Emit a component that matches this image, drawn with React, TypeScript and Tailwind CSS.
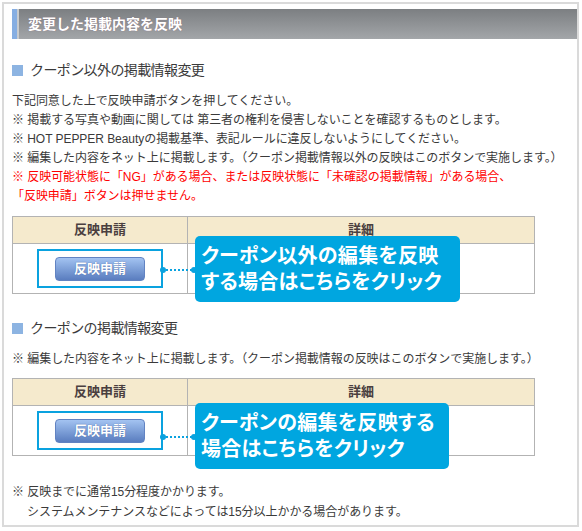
import React from "react";

const FONT = { fontFamily: '"Liberation Sans", "Noto Sans CJK JP", sans-serif' };

function Heading({ children }: { children: React.ReactNode }) {
  return (
    <div className="flex items-center h-[20px] gap-[7px]">
      <div className="w-[11px] h-[11px] bg-[#8db4e2]" />
      <div className="text-[14px] leading-[20px] text-[#3a3a3a] tracking-[-0.6px]">{children}</div>
    </div>
  );
}

function ReflectTable({
  lines,
  calloutW,
  calloutTop,
  dotY,
}: {
  lines: [string, string];
  calloutW: number;
  calloutTop: string;
  dotY: string;
}) {
  return (
    <div className="relative w-[523px] border border-[#b3b3b3]">
      <div className="flex h-[27px] bg-[#f5eacd] border-b border-[#b3b3b3]">
        <div className="w-[175px] border-r border-[#b3b3b3] flex items-center justify-center text-[13px] font-bold text-[#4a3f3f]">
          反映申請
        </div>
        <div className="flex-1 flex items-center justify-center text-[13px] font-bold text-[#4a3f3f]">
          詳細
        </div>
      </div>
      <div className="flex h-[49px]">
        <div className="w-[175px] border-r border-[#b3b3b3] flex items-center justify-center">
          <div className="w-[126px] h-[39px] border-2 border-[#0aa2df] flex items-center justify-center">
            <div className="w-[90px] h-[24px] rounded-[4px] border border-[#6283c2] bg-gradient-to-b from-[#a3c3f1] to-[#5a7dbf] flex items-center justify-center text-white font-bold text-[13px] [text-shadow:0_0_1px_#3b5a99]">
              反映申請
            </div>
          </div>
        </div>
        <div className="flex-1" />
      </div>
      {/* connector */}
      <div className={`absolute left-[147px] w-[6px] h-[6px] rounded-full bg-[#0aa2df] ${dotY}`} />
      <div className={`absolute left-[153px] w-[26px] h-0 border-t-2 border-dotted border-[#0aa2df] mt-[2px] ${dotY}`} />
      <div className={`absolute left-[178px] w-[6px] h-[6px] rounded-full bg-[#0aa2df] ${dotY}`} />
      <div
        className={`absolute left-[182px] ${calloutTop} h-[66px] rounded-[5px] bg-[#00a6e0] text-white font-bold text-[20px] leading-[26px] pt-[7px] pl-[6px] whitespace-nowrap [font-feature-settings:'palt'] tracking-[0.3px]`}
        style={{ width: calloutW }}
      >
        {lines[0]}
        <br />
        {lines[1]}
      </div>
    </div>
  );
}

export default function App() {
  return (
    <div className="w-[582px] h-[531px] bg-white pt-[2px] pl-[2px] pr-[3px] pb-[4px]" style={FONT}>
      <div className="h-full border-2 border-[#dadada] pl-[8px] pt-[5px] text-[#3a3a3a]">
        <div className="flex h-[30px]">
          <div className="w-[5px] bg-[#86aee2]" />
          <div className="w-[2px] bg-[#c8cbce]" />
          <div className="flex-1 bg-gradient-to-b from-[#7c7f82] to-[#a3a6a9] flex items-center pl-[9px] text-white font-bold text-[14px] [text-shadow:0_0_1px_#8a6a7a]">
            変更した掲載内容を反映
          </div>
        </div>

        <div className="mt-[21px]">
          <Heading>クーポン以外の掲載情報変更</Heading>
        </div>

        <div className="mt-[12px] text-[12px] leading-[19px] tracking-[-0.05px] whitespace-nowrap">
          <div>下記同意した上で反映申請ボタンを押してください。</div>
          <div>※ 掲載する写真や動画に関しては 第三者の権利を侵害しないことを確認するものとします。</div>
          <div>※ HOT PEPPER Beautyの掲載基準、表記ルールに違反しないようにしてください。</div>
          <div>※ 編集した内容をネット上に掲載します。（クーポン掲載情報以外の反映はこのボタンで実施します。）</div>
          <div className="text-[#ff0000]">※ 反映可能状態に「NG」がある場合、または反映状態に「未確認の掲載情報」がある場合、</div>
          <div className="text-[#ff0000]">「反映申請」ボタンは押せません。</div>
        </div>

        <div className="mt-[10px]">
          <ReflectTable
            lines={["クーポン以外の編集を反映", "する場合はこちらをクリック"]}
            calloutW={265}
            calloutTop="top-[19px]"
            dotY="top-[50px]"
          />
        </div>

        <div className="mt-[24px]">
          <Heading>クーポンの掲載情報変更</Heading>
        </div>

        <div className="mt-[12px] text-[12px] leading-[19px] tracking-[-0.05px] whitespace-nowrap">
          ※ 編集した内容をネット上に掲載します。（クーポン掲載情報の反映はこのボタンで実施します。）
        </div>

        <div className="mt-[9px]">
          <ReflectTable
            lines={["クーポンの編集を反映する", "場合はこちらをクリック"]}
            calloutW={254}
            calloutTop="top-[24px]"
            dotY="top-[55px]"
          />
        </div>

        <div className="mt-[26px] text-[12px] leading-[20px] tracking-[-0.05px] whitespace-nowrap">
          <div>※ 反映までに通常15分程度かかります。</div>
          <div className="pl-[15px]">システムメンテナンスなどによっては15分以上かかる場合があります。</div>
        </div>
      </div>
    </div>
  );
}
